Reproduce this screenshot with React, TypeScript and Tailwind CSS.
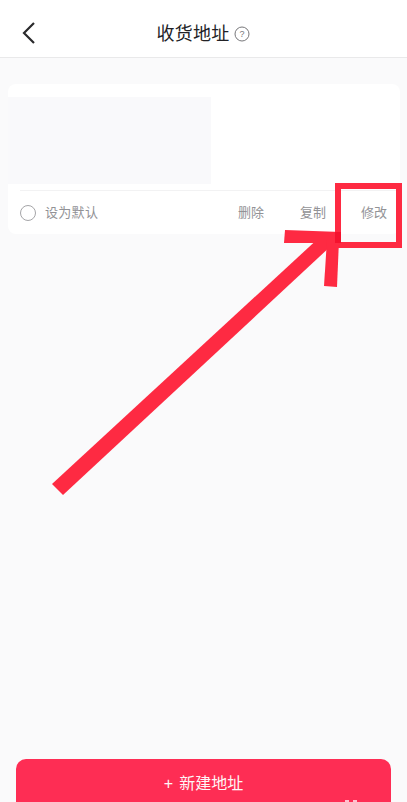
const font = { fontFamily: '"Liberation Sans", "Noto Sans CJK SC", sans-serif' };

export default function App() {
  return (
    <div style={font} className="relative flex h-[802px] w-[407px] flex-col overflow-hidden bg-[#fafafb]">
      <header className="relative flex h-[58px] shrink-0 items-center justify-center gap-[5px] border-b border-[#e9e9ea] bg-white pt-[11px]">
        <svg className="absolute left-[21px] top-[21px]" width="16" height="24" viewBox="0 0 16 24" fill="none">
          <path d="M13 2L3 12l10 10" stroke="#2a2a2c" strokeWidth="2.2" />
        </svg>
        <h1 className="text-[18px] font-normal tracking-[0.2px] text-[#222226]">收货地址</h1>
        <svg className="-mt-px" width="16" height="16" viewBox="0 0 16 16" fill="none">
          <circle cx="8" cy="8" r="7" stroke="#77777a" strokeWidth="1" />
          <text x="8" y="11" textAnchor="middle" fontSize="9" fill="#77777a">?</text>
        </svg>
      </header>

      <main className="flex-1 pl-2 pr-[7px] pt-[26px]">
        <div className="h-[150px] overflow-hidden rounded-lg bg-white pt-[13px]">
          <div className="h-[87px] w-[203px] bg-[#f9f9fb]" />
          <div className="ml-3 mt-[6px] flex h-[44px] items-center border-t border-[#f2f2f3] pr-[13px] text-[13px] text-[#929296]">
            <span className="h-[16px] w-[16px] rounded-full border border-[#a5a5a8]" />
            <span className="ml-[9px] tracking-[0.3px]">设为默认</span>
            <span className="ml-auto">删除</span>
            <span className="ml-[36px]">复制</span>
            <span className="ml-[35px]">修改</span>
          </div>
        </div>
      </main>

      <div className="shrink-0 px-4">
        <button className="-mb-[9px] flex h-[52px] w-[375px] items-start justify-center gap-[6px] rounded-[10px] bg-[#fe2d54] pt-[13px] text-[16px] text-[#fff5f6]">
          <span>+</span>
          <span>新建地址</span>
        </button>
      </div>

      <div className="absolute left-[335px] top-[183px] h-[65px] w-[67px] border-[6px] border-[#fe2a42]" />
      <svg className="pointer-events-none absolute left-0 top-0" width="407" height="802" viewBox="0 0 407 802" fill="none">
        <path d="M52 484L63 495L332 245L322 235Z" fill="#fe2a42" />
        <path d="M285 230L341 232V243L284 243Z" fill="#fe2a42" />
        <path d="M327 240H339L337 287L324 286Z" fill="#fe2a42" />
        <path d="M335 232H341V243H335Z" fill="#f5122e" />
      </svg>
      <span className="absolute left-[345px] top-[800px] h-[2px] w-[4px] bg-[#ffc2cf]" />
      <span className="absolute left-[353px] top-[800px] h-[2px] w-[4px] bg-[#ffc2cf]" />
    </div>
  );
}
